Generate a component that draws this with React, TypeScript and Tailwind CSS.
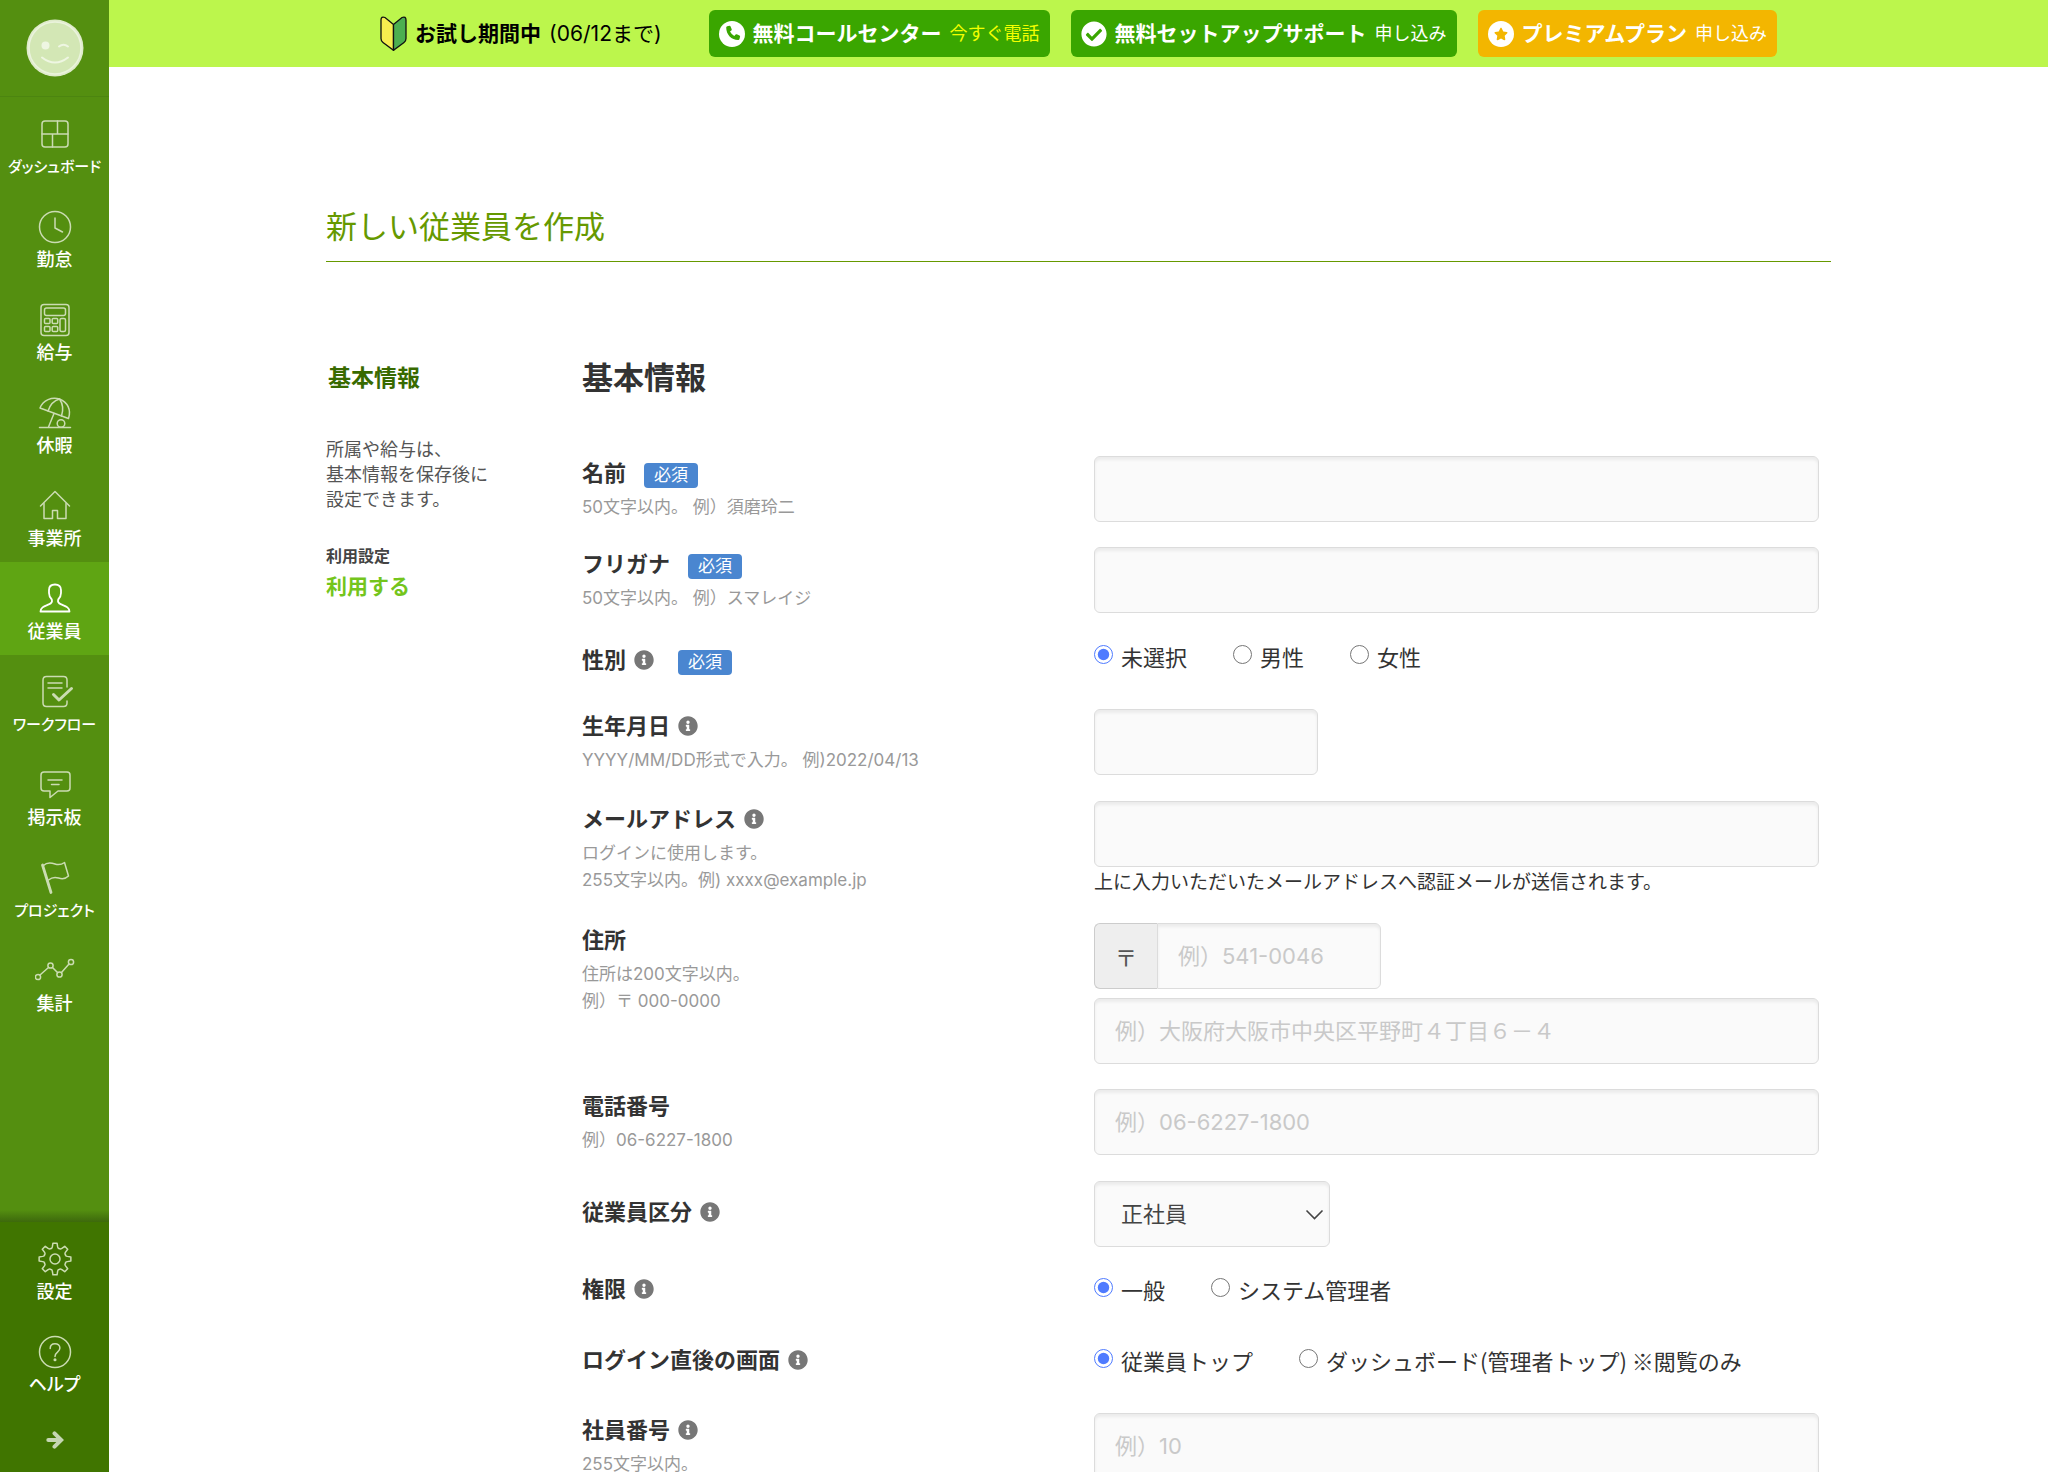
import type { ReactNode } from "react";
import { clsx } from "clsx";
import {
  FaCheckCircle,
  FaInfoCircle,
  FaPhoneAlt,
  FaStar,
} from "react-icons/fa";

function NavIcon({ children }: { children: ReactNode }) {
  return (
    <svg
      width="40"
      height="34"
      viewBox="0 0 40 34"
      fill="none"
      stroke="currentColor"
      strokeWidth="1.5"
      strokeLinecap="round"
      strokeLinejoin="round"
      aria-hidden="true"
    >
      {children}
    </svg>
  );
}

// Eight teeth around the centre, with rounded valleys between them
function gearPath() {
  const at = (angle: number, r: number) =>
    `${(20 + r * Math.cos(angle)).toFixed(2)} ${(17 + r * Math.sin(angle)).toFixed(2)}`;
  let d = "";
  for (let i = 0; i < 8; i++) {
    const a = (i * Math.PI) / 4;
    d += `${i === 0 ? "M" : "L"}${at(a - 0.21, 12.6)} L${at(a - 0.13, 16)} L${at(a + 0.13, 16)} L${at(a + 0.21, 12.6)} `;
    d += `Q${at(a + 0.3, 10.6)} ${at(a + Math.PI / 8, 11.4)} Q${at(a + Math.PI / 4 - 0.3, 10.6)} ${at(a + Math.PI / 4 - 0.21, 12.6)} `;
  }
  return d + "Z";
}

const navItems = [
  {
    label: "ダッシュボード",
    icon: (
      <>
        <rect x="7" y="4" width="26" height="26" rx="3" />
        <path d="M7 17h26M22.5 4v13M17.5 17v13" />
      </>
    ),
  },
  {
    label: "勤怠",
    icon: (
      <>
        <circle cx="20" cy="17" r="15.5" />
        <path d="M20 8v10l7.5 4" />
      </>
    ),
  },
  {
    label: "給与",
    icon: (
      <>
        <rect x="6" y="1.5" width="28" height="31" rx="3" />
        <rect x="9.5" y="5" width="21" height="7.5" rx="2" />
        <rect x="9.5" y="15.5" width="5.5" height="5" rx="1" />
        <rect x="17.2" y="15.5" width="5.5" height="5" rx="1" />
        <rect x="9.5" y="23.5" width="5.5" height="5" rx="1" />
        <rect x="17.2" y="23.5" width="5.5" height="5" rx="1" />
        <rect x="25" y="15.5" width="5.5" height="13" rx="1.5" />
      </>
    ),
  },
  {
    label: "休暇",
    icon: (
      <>
        <path d="M5 12C8 4 17 .5 24.5 3C32.5 6 36.5 14 33.5 22.5Z" />
        <path d="M13 15C15 9 19 4.5 24.5 3C28 8 28.5 14 26.5 20" />
        <path d="M19 17.5L13.5 31M4.5 31.5h31" />
        <circle cx="26" cy="27.5" r="3.8" />
      </>
    ),
  },
  {
    label: "事業所",
    icon: (
      <>
        <path d="M5.5 17L20 2.5L34.5 17" />
        <path d="M9 14.5V29.5h8.5V21.5h5V29.5H31V14.5" />
      </>
    ),
  },
  {
    label: "従業員",
    active: true,
    icon: (
      <path
        strokeWidth="1.8"
        d="M20 2.5c-4 0-6 2-6 5.5v3c0 2.5.8 4.5 2.8 6.5c1 3-.8 4-3 4.900c-4.300 1.800-8 2.600-8.300 7.100h29c-.3-4.500-4-5.300-8.300-7.100c-2.200-.9-4-1.900-3-4.900c2-2 2.800-4 2.800-6.500v-3c0-3.500-2-5.500-6-5.500z"
      />
    ),
  },
  {
    label: "ワークフロー",
    icon: (
      <>
        <path d="M32 12V5q0-3.5-3.5-3.5h-17Q8 1.5 8 5v23q0 3.5 3.5 3.5h17Q32 31.5 32 28v-2" />
        <path d="M13 8h14M13 13h14" />
        <path strokeWidth="3" d="M18.5 19.5l5.5 5.500L36.500 13.500" />
      </>
    ),
  },
  {
    label: "掲示板",
    icon: (
      <>
        <path d="M9 4h23q3 0 3 3v13q0 3-3 3h-9l-8 6.500V23H9q-3 0-3-3V7q0-3 3-3z" />
        <path d="M13 12h14M16.500 16.500h7.500" />
      </>
    ),
  },
  {
    label: "プロジェクト",
    icon: (
      <>
        <path strokeWidth="2.8" d="M7.500 4L16 31.500" />
        <path d="M8.500 4.500C12 1 17 2 20 3s6 1 9.500-1.500L33.500 15c-3.500 3.500-7 3-10 2s-7-.5-10 2" />
      </>
    ),
  },
  {
    label: "集計",
    icon: (
      <>
        <circle cx="3" cy="23" r="2.6" />
        <circle cx="15.5" cy="11.5" r="2.6" />
        <circle cx="24.5" cy="20.5" r="2.6" />
        <circle cx="36" cy="8" r="2.6" />
        <path d="M5 21L13.500 13.500M17.500 13.500l5 5M26.500 18.500L34 10" />
      </>
    ),
  },
];

const bottomItems = [
  {
    label: "設定",
    icon: (
      <>
        <path d={gearPath()} />
        <circle cx="20" cy="17" r="5" />
      </>
    ),
  },
  {
    label: "ヘルプ",
    icon: (
      <>
        <circle cx="20" cy="17" r="15.5" />
        <path d="M15.200 13.500c0-3 2-4.800 4.800-4.800s4.900 1.800 4.900 4.400c0 4.200-4.900 3.900-4.900 8.400" />
        <circle cx="20" cy="24.8" r=".8" fill="currentColor" />
      </>
    ),
  },
];

function NavItem({
  label,
  icon,
  active,
}: {
  label: string;
  icon: ReactNode;
  active?: boolean;
}) {
  return (
    <a
      href="#"
      className={clsx(
        "flex h-[93px] flex-col items-center pt-5",
        active ? "bg-[#5fa513] text-white" : "text-[#cbdcb2]"
      )}
    >
      <NavIcon>{icon}</NavIcon>
      <span
        className={clsx(
          "mt-1 leading-6 font-medium whitespace-nowrap text-white [font-feature-settings:'palt']",
          label.length > 3 ? "text-[15px]" : "text-lg"
        )}
      >
        {label}
      </span>
    </a>
  );
}

function Sidebar() {
  return (
    <nav className="flex w-[109px] shrink-0 flex-col bg-[#548f10]">
      <a
        href="#"
        aria-label="マイページ"
        className="flex h-[97px] justify-center border-b border-[#4c8510] pt-[19px]"
      >
        <svg width="58" height="58" viewBox="0 0 58 58" fill="none">
          <circle cx="29" cy="29" r="28.5" fill="#dfebcb" />
          <circle cx="29" cy="29" r="26" fill="#d3e7b5" stroke="#eaf3dc" strokeWidth="1.5" />
          <circle cx="19.5" cy="26.5" r="4" fill="#eef6e2" />
          <path
            d="M33 27.500q4.500-3.500 9 0M16 38.500q13 10 26 0"
            stroke="#eef6e2"
            strokeWidth="2"
            strokeLinecap="round"
          />
        </svg>
      </a>
      {navItems.map((item) => (
        <NavItem key={item.label} {...item} />
      ))}
      <div className="mt-auto h-3 bg-linear-to-b from-[#548f10] to-[#3d690c]" />
      <div className="bg-[#407500]">
        {bottomItems.map((item) => (
          <NavItem key={item.label} {...item} />
        ))}
        <button
          type="button"
          aria-label="メニューを開く"
          className="flex h-16 w-full items-center justify-center text-[#c6d6b3]"
        >
          <svg
            width="18"
            height="18"
            viewBox="0 0 18 18"
            fill="none"
            stroke="currentColor"
            strokeWidth="4"
            strokeLinecap="round"
          >
            <path d="M2.300 9h11" />
            <path d="M8.500 2.300L15.200 9l-6.700 6.700" />
          </svg>
        </button>
      </div>
    </nav>
  );
}

function BeginnerMark() {
  return (
    <svg width="27" height="35" viewBox="0 0 27 35" strokeWidth="1.3" stroke="#111" aria-hidden="true">
      <path
        d="M13.500 8.500L5 1.500Q1 0 1 4V22.500Q1 25 3 26.500L13.500 34.300Z"
        fill="#f7ee4f"
      />
      <path
        d="M13.500 8.500L22 1.500Q26 0 26 4V22.500Q26 25 24 26.500L13.500 34.300Z"
        fill="#4caf50"
      />
    </svg>
  );
}

function PromoButton({
  icon,
  title,
  action,
  className,
  actionClassName,
}: {
  icon: ReactNode;
  title: string;
  action: string;
  className: string;
  actionClassName?: string;
}) {
  return (
    <button
      type="button"
      className={clsx(
        "flex h-[47px] items-center gap-2 rounded-md px-[10px] whitespace-nowrap text-white",
        className
      )}
    >
      {icon}
      <span className="text-[21px] font-bold">{title}</span>
      <span className={clsx("text-lg", actionClassName)}>{action}</span>
    </button>
  );
}

function TopBar() {
  return (
    <header className="flex h-[67px] shrink-0 items-center justify-center gap-[21px] bg-[#bcf64c]">
      <p className="mr-[26px] flex items-center gap-2 text-[21px] whitespace-nowrap text-black">
        <BeginnerMark />
        <b>お試し期間中</b>
        (06/12まで)
      </p>
      <PromoButton
        title="無料コールセンター"
        action="今すぐ電話"
        className="bg-[#3aa600]"
        actionClassName="text-[#f3ff00]"
        icon={
          <span className="flex size-[26px] items-center justify-center rounded-full bg-white text-[#3aa600]">
            <svg
              width="18"
              height="18"
              viewBox="0 0 18 18"
              fill="currentColor"
              aria-hidden="true"
            >
              <path d="M4.200 1.200L6.600.8q.7 0 1 .6l1.100 2.800q.2.700-.3 1.200L7 6.600q1.400 2.900 4.300 4.400l1.300-1.400q.5-.5 1.200-.3l2.700 1.200q.7.300.6 1l-.6 2.500q-.3.900-1.200.9C8.500 15 3.200 9.600 3.200 2.400q0-1 1-1.200z" />
            </svg>
          </span>
        }
      />
      <PromoButton
        title="無料セットアップサポート"
        action="申し込み"
        className="bg-[#3aa600]"
        icon={<FaCheckCircle size={26} />}
      />
      <PromoButton
        title="プレミアムプラン"
        action="申し込み"
        className="bg-[#f3b600]"
        icon={
          <span className="flex size-[26px] items-center justify-center rounded-full bg-white text-[#f3b600]">
            <FaStar size={14} />
          </span>
        }
      />
    </header>
  );
}

const fieldClass =
  "h-[66px] rounded-md border border-[#dcdcdc] bg-[#fafafa] px-5 text-[22px] text-[#444] shadow-[inset_0_3px_3px_rgba(0,0,0,0.06)] placeholder:text-[#c9c9c9]";

function Row({
  label,
  htmlFor,
  hints = [],
  info,
  required,
  className,
  labelClassName,
  children,
}: {
  label: string;
  htmlFor?: string;
  hints?: string[];
  info?: boolean;
  required?: boolean;
  className: string;
  labelClassName?: string;
  children: ReactNode;
}) {
  return (
    <div className={clsx("grid grid-cols-[512px_1fr] items-start", className)}>
      <div className={labelClassName}>
        <div className="mb-1 flex h-[34px] items-baseline leading-[34px]">
          <label htmlFor={htmlFor} className="text-[22px] font-bold text-[#333]">
            {label}
          </label>
          {info && (
            <FaInfoCircle size={20} className="ml-2 self-center text-[#777]" />
          )}
          {required && (
            <span
              className={clsx(
                "rounded bg-[#4a86d0] px-[10px] text-[17px] leading-[25px] text-white",
                info ? "ml-6" : "ml-[18px]"
              )}
            >
              必須
            </span>
          )}
        </div>
        {hints.map((hint) => (
          <p key={hint} className="text-[17px] leading-[27px] text-[#999]">
            {hint}
          </p>
        ))}
      </div>
      <div>{children}</div>
    </div>
  );
}

function RadioGroup({
  name,
  options,
  className,
}: {
  name: string;
  options: string[];
  className?: string;
}) {
  return (
    <div
      role="radiogroup"
      className={clsx(
        "flex gap-[46px] font-['Noto_Sans_CJK_JP',sans-serif] text-[22px] leading-9 text-[#333]",
        className
      )}
    >
      {options.map((option, i) => (
        <label key={option} className="flex items-center gap-2 whitespace-nowrap">
          <input
            type="radio"
            name={name}
            defaultChecked={i === 0}
            className="mb-1 size-[19px] accent-[#4f7bff]"
          />
          {option}
        </label>
      ))}
    </div>
  );
}

function EmployeeForm() {
  return (
    <form className="pr-3">
      <h2 className="text-[31px] leading-[38px] font-bold text-[#333]">基本情報</h2>
      <div className="mt-[59px]">
        <Row label="名前" htmlFor="name" required hints={["50文字以内。 例）須磨玲二"]} className="min-h-[91px]">
          <input id="name" type="text" className={clsx(fieldClass, "w-full")} />
        </Row>
        <Row label="フリガナ" htmlFor="kana" required hints={["50文字以内。 例）スマレイジ"]} className="min-h-[91px]">
          <input id="kana" type="text" className={clsx(fieldClass, "w-full")} />
        </Row>
        <Row label="性別" info required className="min-h-[71px]" labelClassName="pt-[5px]">
          <RadioGroup name="gender" options={["未選択", "男性", "女性"]} />
        </Row>
        <Row
          label="生年月日"
          htmlFor="birthday"
          info
          hints={["YYYY/MM/DD形式で入力。 例)2022/04/13"]}
          className="min-h-[92px]"
        >
          <input id="birthday" type="text" className={clsx(fieldClass, "w-[224px]")} />
        </Row>
        <Row
          label="メールアドレス"
          htmlFor="email"
          info
          hints={["ログインに使用します。", "255文字以内。例) xxxx@example.jp"]}
          className="min-h-[122px]"
          labelClassName="pt-[1px]"
        >
          <input id="email" type="email" className={clsx(fieldClass, "block w-full")} />
          <p className="text-[19px] leading-8 text-[#333]">
            上に入力いただいたメールアドレスへ認証メールが送信されます。
          </p>
        </Row>
        <Row
          label="住所"
          htmlFor="postal"
          hints={["住所は200文字以内。", "例）〒 000-0000"]}
          className="min-h-[166px]"
        >
          <div className="flex">
            <span className="flex w-[63px] items-center justify-center rounded-l-md border border-r-0 border-[#ccc] bg-[#eee] font-['Noto_Sans_CJK_JP',sans-serif] text-[22px] text-[#555]">
              〒
            </span>
            <input
              id="postal"
              type="text"
              placeholder="例）541-0046"
              className={clsx(fieldClass, "w-[224px] rounded-l-none")}
            />
          </div>
          <input
            type="text"
            aria-label="住所"
            placeholder="例）大阪府大阪市中央区平野町４丁目６－４"
            className={clsx(fieldClass, "mt-[9px] w-full")}
          />
        </Row>
        <Row label="電話番号" htmlFor="phone" hints={["例）06-6227-1800"]} className="min-h-[92px]">
          <input
            id="phone"
            type="tel"
            placeholder="例）06-6227-1800"
            className={clsx(fieldClass, "w-full")}
          />
        </Row>
        <Row label="従業員区分" htmlFor="division" info className="min-h-[86px]" labelClassName="pt-[14px]">
          <div className="relative w-[236px]">
            <select id="division" className={clsx(fieldClass, "w-full appearance-none pl-[26px]")}>
              <option>正社員</option>
              <option>契約社員</option>
              <option>アルバイト</option>
            </select>
            <svg
              className="pointer-events-none absolute top-7 right-[6px]"
              width="19"
              height="11"
              viewBox="0 0 19 11"
              fill="none"
              stroke="#444"
              strokeWidth="1.6"
            >
              <path d="M1.500 1.500l8 8l8-8" />
            </svg>
          </div>
        </Row>
        <Row label="権限" info className="min-h-[71px]" labelClassName="pt-[5px]">
          <RadioGroup name="role" options={["一般", "システム管理者"]} className="pt-1" />
        </Row>
        <Row label="ログイン直後の画面" info className="min-h-[75px]" labelClassName="pt-[5px]">
          <RadioGroup
            name="landing"
            options={["従業員トップ", "ダッシュボード(管理者トップ) ※閲覧のみ"]}
            className="pt-1"
          />
        </Row>
        <Row label="社員番号" htmlFor="number" info hints={["255文字以内。"]} className="min-h-[91px]">
          <input
            id="number"
            type="text"
            placeholder="例）10"
            className={clsx(fieldClass, "w-full")}
          />
        </Row>
      </div>
    </form>
  );
}

export default function App() {
  return (
    <div
      lang="ja"
      className="flex h-screen overflow-hidden bg-white font-['Inter','Noto_Sans_CJK_JP',sans-serif]"
    >
      <Sidebar />
      <div className="flex min-w-0 flex-1 flex-col">
        <TopBar />
        <main className="flex-1 overflow-y-auto px-6 [scrollbar-width:none]">
          <div className="mx-auto max-w-[1505px] pt-[136px]">
            <h1 className="border-b border-[#690] pb-[10px] text-[31px] leading-12 text-[#690]">
              新しい従業員を作成
            </h1>
            <div className="mt-[97px] grid grid-cols-[256px_1fr]">
              <aside>
                <h2 className="pl-[2px] text-[23px] leading-[38px] font-bold text-[#386a00]">
                  基本情報
                </h2>
                <p className="mt-10 text-lg leading-[25px] text-[#555]">
                  所属や給与は、
                  <br />
                  基本情報を保存後に
                  <br />
                  設定できます。
                </p>
                <h3 className="mt-8 text-base leading-[25px] font-bold text-[#444]">
                  利用設定
                </h3>
                <p className="text-[21px] leading-9 font-bold text-[#74c51c]">
                  利用する
                </p>
              </aside>
              <EmployeeForm />
            </div>
          </div>
        </main>
      </div>
    </div>
  );
}
